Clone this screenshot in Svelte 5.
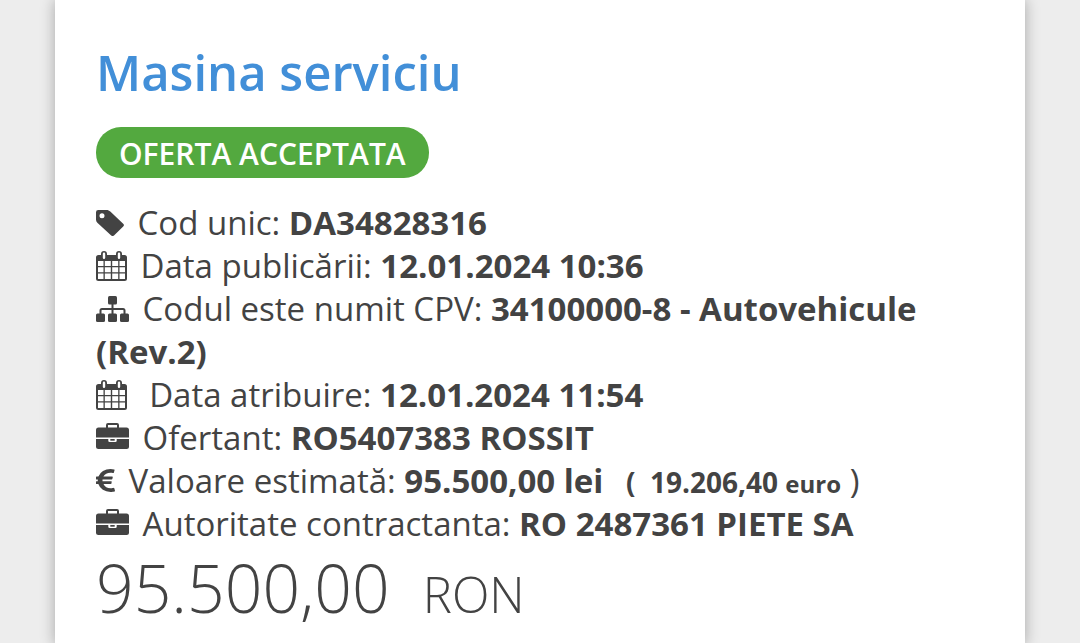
<script>
  const title = 'Masina serviciu'
  const status = 'OFERTA ACCEPTATA'

  const details = [
    { icon: 'tag', label: 'Cod unic:', value: 'DA34828316' },
    { icon: 'calendar', label: 'Data publicării:', value: '12.01.2024 10:36' },
    {
      icon: 'sitemap',
      label: 'Codul este numit CPV:',
      value: '34100000-8 - Autovehicule (Rev.2)',
    },
    {
      icon: 'calendar',
      label: '\u00a0Data atribuire:',
      value: '12.01.2024 11:54',
    },
    { icon: 'briefcase', label: 'Ofertant:', value: 'RO5407383 ROSSIT' },
    {
      icon: 'euro',
      label: 'Valoare estimată:',
      value: '95.500,00 lei',
      euro: '19.206,40',
    },
    {
      icon: 'briefcase',
      label: 'Autoritate contractanta:',
      value: 'RO 2487361 PIETE SA',
    },
  ]
</script>

{#snippet glyph(name)}
  {#if name === 'tag'}
    <svg class="icon tag" viewBox="0 0 28 26" aria-hidden="true">
      <path
        fill-rule="evenodd"
        d="M2.200 0h8.300c1.500 0 2.800.6 3.800 1.500l12.900 12.200a1.800 1.800 0 0 1 0 2.700l-9.200 9a2 2 0 0 1-2.800 0L1.600 13A4.500 4.500 0 0 1 0 9.500V2.200A2.200 2.200 0 0 1 2.200 0zM6 3.200a2.500 2.500 0 1 0 0 5 2.500 2.500 0 0 0 0-5z"
      />
    </svg>
  {:else if name === 'calendar'}
    <svg class="icon calendar" viewBox="0 0 31 30" aria-hidden="true">
      <path
        fill-rule="evenodd"
        d="M2.500 4H5V3a3 3 0 0 1 6 0v1h9V3a3 3 0 0 1 6 0v1h2.500A2.500 2.500 0 0 1 31 6.500v21a2.500 2.500 0 0 1-2.500 2.500h-26A2.500 2.500 0 0 1 0 27.500v-21A2.500 2.500 0 0 1 2.500 4zM6.800 2.700v4a1.200 1.200 0 0 0 2.400 0v-4a1.200 1.200 0 0 0-2.400 0zm15 0v4a1.200 1.200 0 0 0 2.400 0v-4a1.200 1.200 0 0 0-2.400 0zM2 10v5h5.500v-5zm6.800 0v5h6v-5zm7.400 0v5h6v-5zm7.300 0v5H29v-5zM2 16.300v5h5.500v-5zm6.800 0v5h6v-5zm7.400 0v5h6v-5zm7.300 0v5H29v-5zM2 22.600V28h5.500v-5.400zm6.800 0V28h6v-5.400zm7.400 0V28h6v-5.400zm7.300 0V28H29v-5.400z"
      />
    </svg>
  {:else if name === 'sitemap'}
    <svg class="icon sitemap" viewBox="0 0 33 26" aria-hidden="true">
      <rect x="12" y="0" width="9" height="8.500" rx="1.500" />
      <rect x="0" y="17.500" width="9" height="8.500" rx="1.500" />
      <rect x="12" y="17.500" width="9" height="8.500" rx="1.500" />
      <rect x="24" y="17.500" width="9" height="8.500" rx="1.500" />
      <path
        class="line"
        d="M16.500 7v12M4.500 19v-4.500a1.500 1.500 0 0 1 1.500-1.500h21a1.500 1.500 0 0 1 1.500 1.500V19"
      />
    </svg>
  {:else if name === 'briefcase'}
    <svg class="icon briefcase" viewBox="0 0 33 26" aria-hidden="true">
      <path
        fill-rule="evenodd"
        d="M10 4.500V2a2 2 0 0 1 2-2h9a2 2 0 0 1 2 2v2.500h7.500A2.500 2.500 0 0 1 33 7v7.500H0V7a2.500 2.500 0 0 1 2.500-2.500zm2 0h9V2h-9z"
      />
      <path
        d="M0 16h12.300v1.700a1.300 1.300 0 0 0 1.300 1.300h5.800a1.300 1.300 0 0 0 1.300-1.300V16H33v7.500a2.500 2.500 0 0 1-2.500 2.500h-28A2.500 2.500 0 0 1 0 23.500z"
      />
      <path d="M14.300 16h4.400v1.700h-4.400z" />
    </svg>
  {:else}
    <svg class="icon euro" viewBox="386 126 1010 1412" preserveAspectRatio="none" aria-hidden="true">
      <path
        d="M1360 1307l35 159q3 12-3 22.500t-17 14.500l-5 1q-4 2-10.500 3.500t-16 4.500-21.500 5.500-25.500 5-30 5-33.500 4.500-36.500 3-38.500 1q-234 0-409-130.500t-238-351.500h-95q-13 0-22.500-9.500t-9.500-22.500v-113q0-13 9.500-22.500t22.500-9.500h66q-2-57 1-105h-67q-14 0-23-9t-9-23v-114q0-14 9-23t23-9h98q67-210 243.500-338t400.500-128q102 0 194 23 11 3 20 15 6 11 3 24l-43 159q-3 13-14 19.500t-24 2.500l-4-1q-4-1-11.500-2.500l-17.500-3.500-22.500-3.500-26-3-29-2.500-29.500-1q-126 0-226 64t-150 176h468q16 0 25 12 10 12 7 26l-24 114q-5 26-32 26h-488q-3 37 0 105h459q15 0 25 12 9 12 6 27l-24 112q-2 11-11 18.500t-20 7.500h-387q48 117 149.500 185.500t228.500 68.500q18 0 36-1.500t33.500-3.500 29.500-4.500 24.500-5 18.500-4.500l12-3 5-2q13-5 26 2 12 7 15 21z"
      />
    </svg>
  {/if}
{/snippet}

<main>
  <article>
    <h1>{title}</h1>
    <span class="badge">{status}</span>

    <ul>
      {#each details as item}
        <li>
          {@render glyph(item.icon)}
          {item.label} <strong>{item.value}</strong>
          {#if item.euro}
            <b class="converted">(&nbsp; {item.euro} <small>euro</small></b> )
          {/if}
        </li>
      {/each}
    </ul>

    <p class="price">95.500,00 <span>RON</span></p>
  </article>
</main>

<style>
  :global(body) {
    margin: 0;
    background: #ededed;
  }

  main {
    display: flow-root;
    padding: 0 55px;
    overflow: hidden;
    font-family: 'Open Sans', sans-serif;
    color: #434343;
  }

  article {
    min-height: 100vh;
    box-sizing: border-box;
    padding: 40px 41px 16px;
    background: #fff;
    box-shadow: 0 0 14px rgba(0, 0, 0, 0.3);
  }

  h1 {
    margin: 0;
    font-size: 49px;
    font-weight: 600;
    line-height: 64px;
    color: #428fd8;
  }

  .badge {
    display: table;
    margin-top: 23px;
    padding: 3px 23px 0;
    border-radius: 25px;
    background: #53a93f;
    color: #fff;
    font-size: 30px;
    font-weight: 600;
    line-height: 48px;
  }

  ul {
    list-style: none;
    margin: 23px 0 0;
    padding: 0;
    font-size: 33px;
    line-height: 43px;
  }

  .icon {
    margin-right: 5px;
    fill: currentColor;
    vertical-align: -1px;
  }

  .tag {
    width: 28px;
    height: 26px;
  }

  .calendar {
    width: 31px;
    height: 30px;
    vertical-align: -3px;
  }

  .sitemap,
  .briefcase {
    width: 33px;
    height: 26px;
  }

  .briefcase {
    vertical-align: 1px;
  }

  .euro {
    width: 19px;
    height: 23px;
    vertical-align: 1px;
  }

  .line {
    fill: none;
    stroke: currentColor;
    stroke-width: 2;
  }

  .converted {
    margin-left: 14px;
    font-size: 28px;
    line-height: 1;
  }

  small {
    font-size: 24px;
  }

  .price {
    margin: 0;
    font-size: 66px;
    font-weight: 300;
    line-height: 84px;
  }

  .price span {
    margin-left: 16px;
    font-size: 49px;
    line-height: 1;
  }
</style>
